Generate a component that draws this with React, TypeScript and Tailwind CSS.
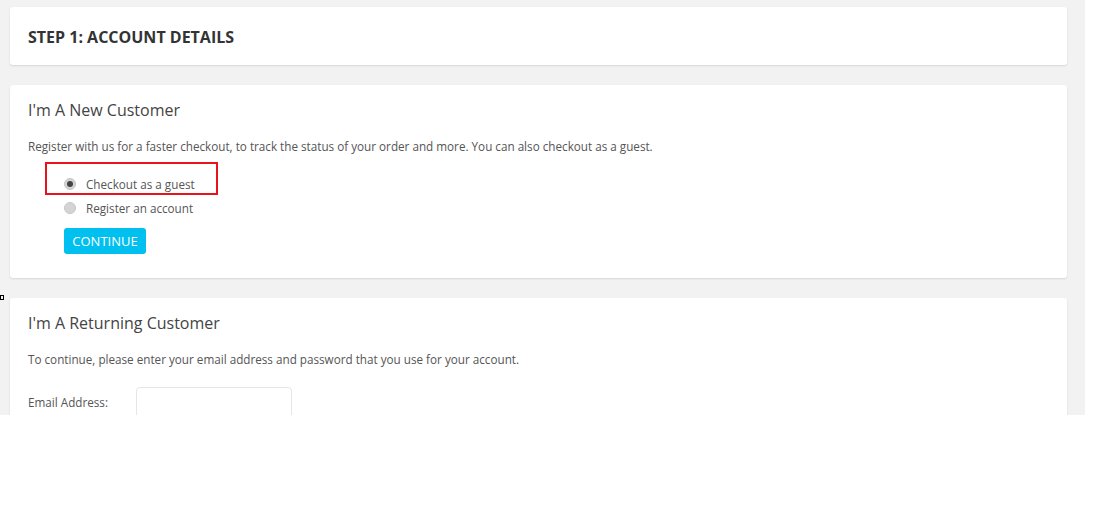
import React from 'react';

const Radio: React.FC<{ checked?: boolean }> = ({ checked }) => (
  <span className="w-[12px] h-[12px] rounded-full bg-[#d4d4d4] border border-[#c6c6c6] flex items-center justify-center shrink-0">
    {checked && <span className="w-[6px] h-[6px] rounded-full bg-[#444]" />}
  </span>
);

const Card: React.FC<{ children: React.ReactNode; className?: string }> = ({ children, className }) => (
  <div className={`bg-white rounded-[3px] shadow-[0_1px_2px_rgba(0,0,0,0.12)] ${className ?? ''}`}>{children}</div>
);

export default function App() {
  return (
    <div className="w-[1095px] h-[522px] bg-white font-['Open_Sans',sans-serif] text-[#555]">
      <div className="relative w-[1085px] h-[415px] overflow-hidden bg-[#f2f2f2] pl-[10px] pr-[18px] pt-[7px]">
        {/* stray marker on left edge */}
        <span className="absolute left-0 top-[295px] w-[4px] h-[5px] border border-black" />

        <Card className="h-[58px] flex items-center px-[18px]">
          <h1 className="text-[16px] font-bold text-[#333] uppercase pt-[1px]">Step 1: Account Details</h1>
        </Card>

        <Card className="mt-[20px] h-[193px] px-[18px] pt-[13px]">
          <h2 className="text-[16px] text-[#444] leading-[24px]">I'm A New Customer</h2>
          <p className="mt-[15px] text-[11.7px] leading-[18px]">
            Register with us for a faster checkout, to track the status of your order and more. You can also checkout as a guest.
          </p>
          <div className="relative mt-[20px] pl-[36px] flex flex-col gap-[6px]">
            <span className="absolute left-[17px] top-[-13px] w-[173px] h-[33px] border-2 border-[#e8141c]" />
            <label className="flex items-center gap-[10px] text-[11.7px] leading-[18px]">
              <Radio checked />
              Checkout as a guest
            </label>
            <label className="flex items-center gap-[10px] text-[11.7px] leading-[18px]">
              <Radio />
              Register an account
            </label>
          </div>
          <button className="block mt-[11px] ml-[36px] w-[82px] h-[26px] rounded-[3px] bg-[#00c0ef] text-white text-[13px] leading-[26px]">
            CONTINUE
          </button>
        </Card>

        <Card className="mt-[20px] h-[200px] px-[18px] pt-[13px]">
          <h2 className="text-[16px] text-[#444] leading-[24px]">I'm A Returning Customer</h2>
          <p className="mt-[15px] text-[11.7px] leading-[18px]">
            To continue, please enter your email address and password that you use for your account.
          </p>
          <div className="mt-[19px] flex items-start">
            <label className="w-[108px] pt-[6px] text-[11.7px] leading-[18px]">Email Address:</label>
            <input className="w-[156px] h-[32px] rounded-[4px] border border-[#e6e6e6] bg-white" />
          </div>
        </Card>
      </div>
    </div>
  );
}
